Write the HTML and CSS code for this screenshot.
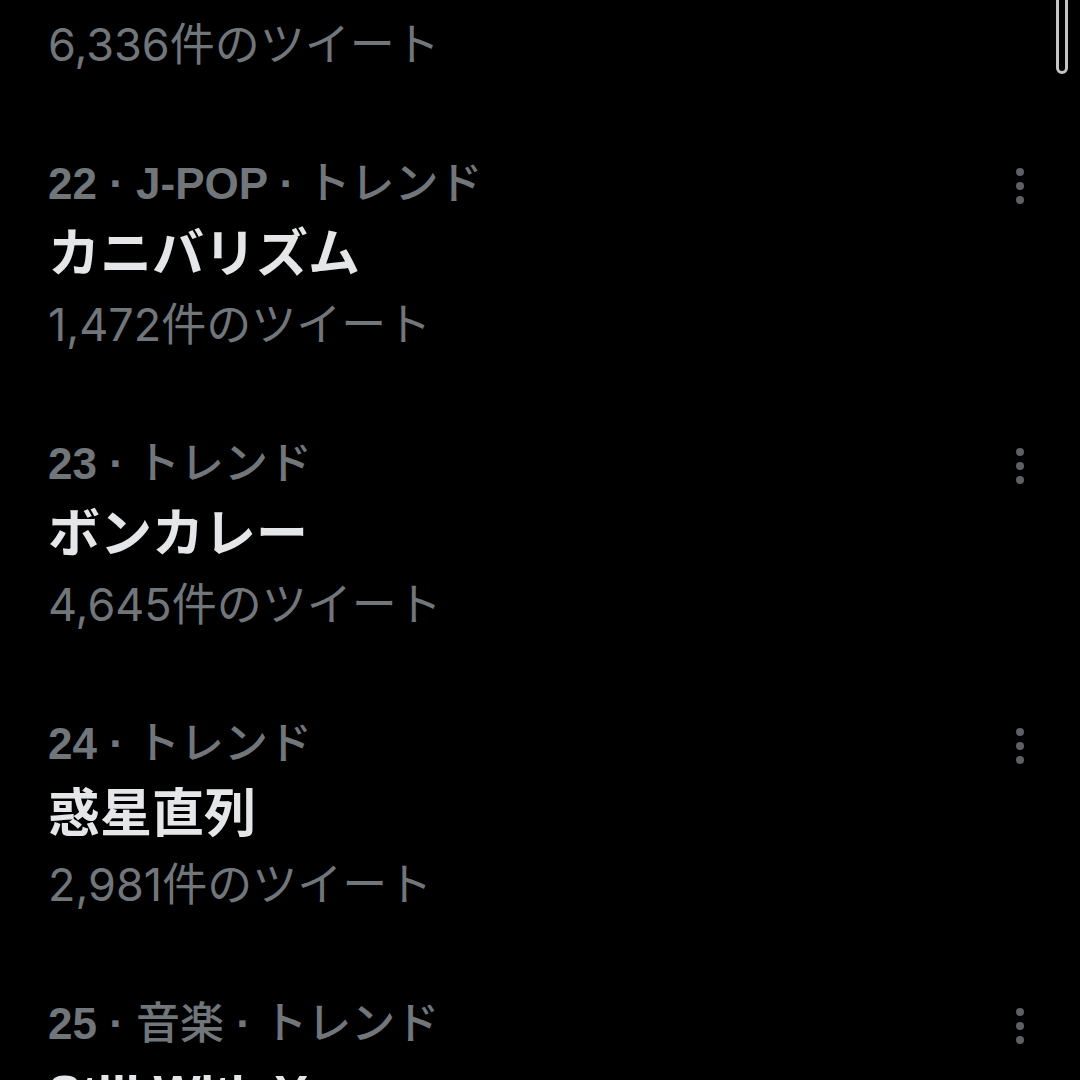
FILE: index.html
```html
<!DOCTYPE html>
<html lang="ja">
<head>
    <meta charset="UTF-8">
    <meta name="viewport" content="width=device-width, initial-scale=1.0">
    <title>トレンド</title>
    <link rel="stylesheet" href="styles.css">
</head>
<body>

<div class="scroll-thumb"></div>

<div class="trends">
    <!-- tail of trend 21, scrolled mostly off screen -->
    <div class="trend cut">
        <div class="trend-count">6,336件のツイート</div>
    </div>

    <div class="trend">
        <div class="trend-head">
            <span>22 · J-POP · <span class="jp">トレンド</span></span>
            <svg class="more" viewBox="0 0 8 36"><circle cx="4" cy="4" r="4"/><circle cx="4" cy="18" r="4"/><circle cx="4" cy="32" r="4"/></svg>
        </div>
        <div class="trend-title">カニバリズム</div>
        <div class="trend-count">1,472件のツイート</div>
    </div>

    <div class="trend">
        <div class="trend-head">
            <span>23 · <span class="jp">トレンド</span></span>
            <svg class="more" viewBox="0 0 8 36"><circle cx="4" cy="4" r="4"/><circle cx="4" cy="18" r="4"/><circle cx="4" cy="32" r="4"/></svg>
        </div>
        <div class="trend-title">ボンカレー</div>
        <div class="trend-count">4,645件のツイート</div>
    </div>

    <div class="trend">
        <div class="trend-head">
            <span>24 · <span class="jp">トレンド</span></span>
            <svg class="more" viewBox="0 0 8 36"><circle cx="4" cy="4" r="4"/><circle cx="4" cy="18" r="4"/><circle cx="4" cy="32" r="4"/></svg>
        </div>
        <div class="trend-title">惑星直列</div>
        <div class="trend-count">2,981件のツイート</div>
    </div>

    <div class="trend">
        <div class="trend-head">
            <span>25 · <span class="jp">音楽</span> · <span class="jp">トレンド</span></span>
            <svg class="more" viewBox="0 0 8 36"><circle cx="4" cy="4" r="4"/><circle cx="4" cy="18" r="4"/><circle cx="4" cy="32" r="4"/></svg>
        </div>
        <div class="trend-title latin">Still With You</div>
        <div class="trend-count">12,345件のツイート</div>
    </div>
</div>

</body>
</html>
```

FILE: styles.css
```css
html, body {
    margin: 0;
    padding: 0;
    background-color: #000;
    overflow: hidden;
}

body {
    font-family: "Liberation Sans", "Noto Sans CJK JP", sans-serif;
    color: #71767b;
    height: 1080px;
}

.trends {
    display: flex;
    flex-direction: column;
}

.trend {
    padding: 34px 56px 34px 48px;
}

.trend.cut {
    padding-top: 10px;
}

.trend-head {
    display: flex;
    justify-content: space-between;
    align-items: center;
    box-sizing: border-box;
    height: 70px;
    padding-bottom: 6px;
    font-size: 44px;
    font-weight: bold;
    white-space: nowrap;
}

.trend-head .jp {
    font-weight: 500;
}

.more {
    width: 8px;
    height: 36px;
    fill: #5d6064;
    margin-top: 12px;
}

.trend-title {
    height: 72px;
    line-height: 72px;
    font-size: 52px;
    font-weight: bold;
    color: #e4e6e7;
    white-space: nowrap;
}

.trend-title.latin {
    font-size: 50px;
}

.trend-count {
    height: 70px;
    line-height: 70px;
    font-family: Inter, "Noto Sans CJK JP", sans-serif;
    font-size: 45px;
    white-space: nowrap;
}

.scroll-thumb {
    position: absolute;
    top: -20px;
    right: 12px;
    width: 6px;
    height: 88px;
    border: 3px solid #c4c4c4;
    border-radius: 0 0 6px 6px;
    background-color: #000;
}
```
